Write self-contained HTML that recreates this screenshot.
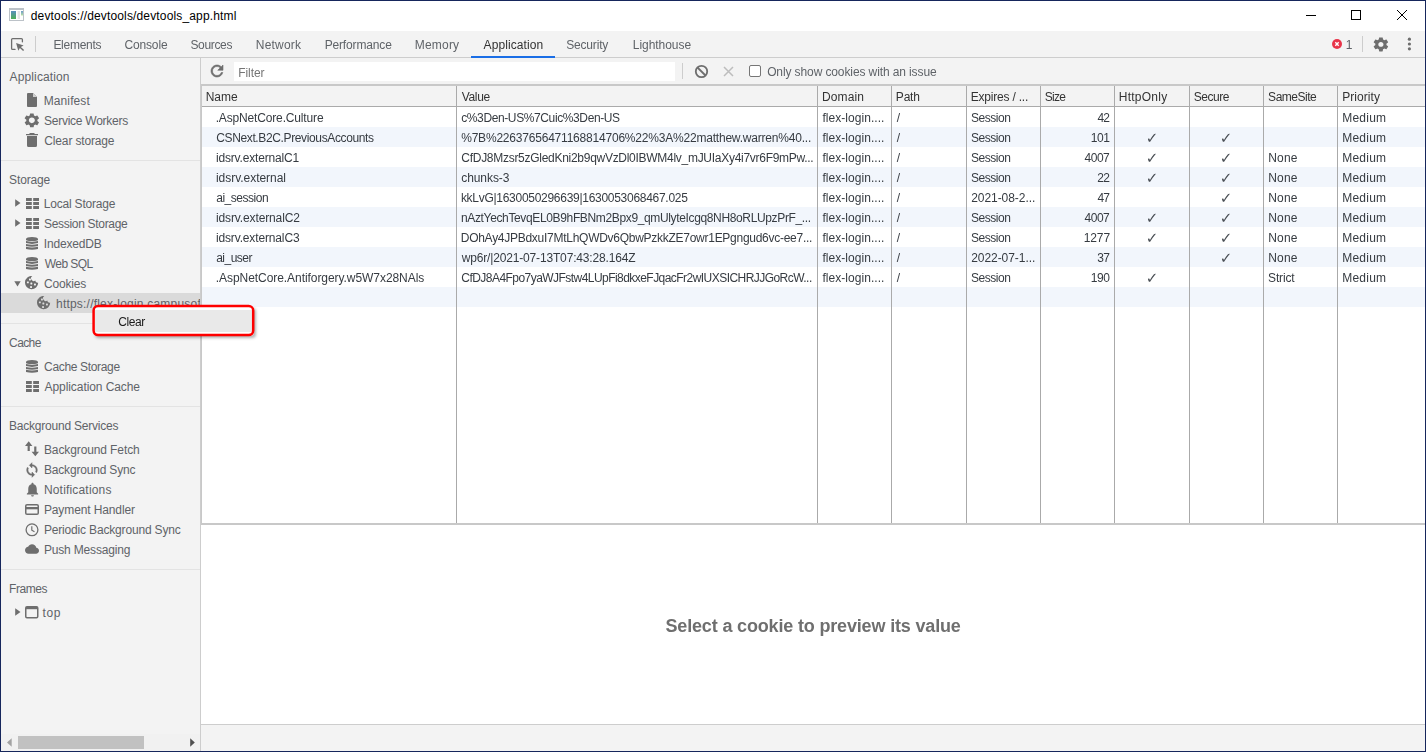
<!DOCTYPE html>
<html><head><meta charset="utf-8"><title>devtools</title>
<style>
*{box-sizing:border-box;margin:0;padding:0}
html,body{width:1426px;height:752px;overflow:hidden;background:#fff}
body{font-family:"Liberation Sans",sans-serif;font-size:12px;color:#303942;position:relative}
div,svg{position:absolute}
.t{white-space:nowrap;color:#363b41}
.g{will-change:transform;left:0;top:0;width:1426px;height:752px}
.ck{width:16px;text-align:center;line-height:20px;font-size:15px;color:#4a4f55;font-family:"DejaVu Sans","Liberation Sans",sans-serif}
.ic{fill:#6e6e6e}
</style></head>
<body>
<!-- title bar -->
<div style="left:1px;top:1px;width:1424px;height:30px;background:#fff"></div>
<svg style="left:9px;top:8px" width="15" height="13" viewBox="0 0 15 13"><defs><linearGradient id="tg1" x1="0" y1="0" x2="0" y2="1"><stop offset="0" stop-color="#5a8fbe"/><stop offset="1" stop-color="#4cae55"/></linearGradient><linearGradient id="tg2" x1="0" y1="0" x2="0" y2="1"><stop offset="0" stop-color="#6a9acb"/><stop offset="1" stop-color="#b9e3a4"/></linearGradient></defs><rect x="0" y="0" width="15" height="13" fill="#bcc2c8"/><rect x="1" y="2" width="13" height="10" fill="#fff"/><rect x="2" y="3" width="5" height="8" fill="url(#tg1)"/><rect x="8.600" y="3" width="2.400" height="8" fill="#e4e4e4"/><rect x="12" y="3" width="2" height="4.500" fill="url(#tg2)"/></svg>
<div class="t" style="left:30.8px;top:1px;line-height:30px;letter-spacing:0.151px;color:#000;">devtools://devtools/devtools_app.html</div>
<svg style="left:1306px;top:15px" width="10" height="1"><rect width="10" height="1" fill="#000"/></svg>
<svg style="left:1351px;top:10px" width="11" height="11"><rect x="0.5" y="0.5" width="9" height="9" fill="none" stroke="#000" stroke-width="1"/></svg>
<svg style="left:1396px;top:9px" width="12" height="12"><path d="M1 1 L11 11 M11 1 L1 11" stroke="#000" stroke-width="1" fill="none"/></svg>

<!-- tab bar -->
<div style="left:1px;top:31px;width:1424px;height:27px;background:#f3f3f3"></div>
<div style="left:1px;top:57px;width:1424px;height:1px;background:#cdcdcd"></div>
<div style="left:471px;top:56px;width:84px;height:2px;background:#1a6ee6"></div>
<svg style="left:10px;top:37px" width="16" height="16" viewBox="0 0 16 16"><path d="M12.400 4.800V2.600Q12.400 1.600 11.400 1.600H2.600Q1.600 1.600 1.600 2.600V11.400Q1.600 12.400 2.600 12.400H5" fill="none" stroke="#6e6e6e" stroke-width="1.300" stroke-linecap="round"/><path d="M6.100 6.100 L13.600 8.400 L10.900 9.900 L14.100 13.100 L13.100 14.100 L9.900 10.900 L8.300 13.700 Z" fill="#6e6e6e"/></svg>
<div style="left:35px;top:36px;width:1px;height:16px;background:#cdcdcd"></div>
<div class="g">
<div class="t" style="left:53.38px;top:31px;line-height:28px;letter-spacing:-0.271px;color:#5f6368;">Elements</div>
<div class="t" style="left:124.41px;top:31px;line-height:28px;letter-spacing:-0.14px;color:#5f6368;">Console</div>
<div class="t" style="left:190.44px;top:31px;line-height:28px;letter-spacing:-0.333px;color:#5f6368;">Sources</div>
<div class="t" style="left:255.84px;top:31px;line-height:28px;letter-spacing:0.19px;color:#5f6368;">Network</div>
<div class="t" style="left:324.66px;top:31px;line-height:28px;letter-spacing:-0.152px;color:#5f6368;">Performance</div>
<div class="t" style="left:414.76px;top:31px;line-height:28px;letter-spacing:0.202px;color:#5f6368;">Memory</div>
<div class="t" style="left:483.59px;top:31px;line-height:28px;letter-spacing:0.098px;color:#333;">Application</div>
<div class="t" style="left:566.21px;top:31px;line-height:28px;letter-spacing:-0.174px;color:#5f6368;">Security</div>
<div class="t" style="left:632.76px;top:31px;line-height:28px;letter-spacing:-0.045px;color:#5f6368;">Lighthouse</div><div class="t" style="left:1345.74px;top:31px;line-height:28px;color:#5f6368;">1</div>
</div>
<svg style="left:1332px;top:39px" width="10" height="10" viewBox="0 0 10 10"><circle cx="5" cy="5" r="5" fill="#e8354a"/><path d="M3.300 3.300 L6.700 6.700 M6.700 3.300 L3.300 6.700" stroke="#fff" stroke-width="1.400"/></svg>
<div style="left:1362px;top:36px;width:1px;height:16px;background:#cdcdcd"></div>
<svg style="left:1372.100px;top:35.500px" width="17.800" height="16.800" viewBox="0 0 24 24" preserveAspectRatio="none"><path fill="#6e6e6e" d="M19.430 12.980c.040-.320.070-.640.070-.980s-.030-.660-.070-.980l2.110-1.650c.190-.150.240-.420.120-.640l-2-3.460c-.120-.220-.390-.300-.610-.220l-2.490 1c-.520-.400-1.080-.730-1.690-.980l-.380-2.650C14.460 2.180 14.250 2 14 2h-4c-.250 0-.460.180-.490.420l-.380 2.650c-.610.250-1.170.590-1.690.980l-2.490-1c-.230-.090-.490 0-.610.220l-2 3.460c-.130.220-.070.490.120.640l2.110 1.650c-.040.320-.070.650-.070.980s.030.660.070.980l-2.110 1.650c-.190.150-.240.420-.120.640l2 3.460c.120.220.390.300.610.220l2.490-1c.520.400 1.080.730 1.690.980l.380 2.650c.030.240.240.420.490.420h4c.250 0 .460-.180.490-.420l.380-2.650c.610-.250 1.170-.590 1.690-.980l2.490 1c.230.090.490 0 .610-.220l2-3.460c.120-.220.070-.490-.120-.640l-2.110-1.650zM12 15.500c-1.930 0-3.500-1.570-3.500-3.500s1.570-3.500 3.500-3.500 3.500 1.570 3.500 3.500-1.570 3.500-3.500 3.500z"/></svg>
<svg style="left:1407px;top:37px" width="5" height="14" viewBox="0 0 5 14"><circle cx="2.400" cy="2.200" r="1.600" fill="#6e6e6e"/><circle cx="2.400" cy="7" r="1.600" fill="#6e6e6e"/><circle cx="2.400" cy="11.800" r="1.600" fill="#6e6e6e"/></svg>

<!-- sidebar -->
<div style="left:1px;top:58px;width:199px;height:693px;background:#f3f3f3"></div>
<div style="left:200px;top:58px;width:1px;height:693px;background:#cdcdcd"></div>
<div style="left:1px;top:160px;width:199px;height:1px;background:#e3e3e3"></div>
<div style="left:1px;top:323px;width:199px;height:1px;background:#e3e3e3"></div>
<div style="left:1px;top:406px;width:199px;height:1px;background:#e3e3e3"></div>
<div style="left:1px;top:569px;width:199px;height:1px;background:#e3e3e3"></div>
<div style="left:1px;top:293px;width:199px;height:20px;background:#dadada"></div>
<div style="left:1px;top:58px;width:199px;height:693px;overflow:hidden"><div style="left:-1px;top:-58px;width:1426px;height:752px">
<div class="t" style="left:56.0px;top:294px;line-height:20px;letter-spacing:0.206px;color:#5f6368;">https://flex-login.campusof</div>
</div></div>
<div class="t" style="left:9.59px;top:67px;line-height:20px;letter-spacing:0.123px;color:#5f6368;">Application</div>
<div class="t" style="left:9.08px;top:170px;line-height:20px;letter-spacing:-0.143px;color:#5f6368;">Storage</div>
<div class="t" style="left:9.08px;top:333px;line-height:20px;letter-spacing:-0.609px;color:#5f6368;">Cache</div>
<div class="t" style="left:9.1px;top:416px;line-height:20px;letter-spacing:-0.227px;color:#5f6368;">Background Services</div>
<div class="t" style="left:9.1px;top:579px;line-height:20px;letter-spacing:-0.438px;color:#5f6368;">Frames</div>
<div class="t" style="left:43.76px;top:91px;line-height:20px;letter-spacing:0.092px;color:#5f6368;">Manifest</div>
<div class="t" style="left:43.99px;top:111px;line-height:20px;letter-spacing:-0.254px;color:#5f6368;">Service Workers</div>
<div class="t" style="left:44.32px;top:131px;line-height:20px;letter-spacing:-0.154px;color:#5f6368;">Clear storage</div>
<div class="t" style="left:43.76px;top:194px;line-height:20px;letter-spacing:-0.2px;color:#5f6368;">Local Storage</div>
<div class="t" style="left:43.99px;top:214px;line-height:20px;letter-spacing:-0.306px;color:#5f6368;">Session Storage</div>
<div class="t" style="left:43.76px;top:234px;line-height:20px;letter-spacing:-0.162px;color:#5f6368;">IndexedDB</div>
<div class="t" style="left:44.76px;top:254px;line-height:20px;letter-spacing:-0.57px;color:#5f6368;">Web SQL</div>
<div class="t" style="left:44.08px;top:274px;line-height:20px;letter-spacing:-0.215px;color:#5f6368;">Cookies</div>
<div class="t" style="left:44.08px;top:357px;line-height:20px;letter-spacing:-0.335px;color:#5f6368;">Cache Storage</div>
<div class="t" style="left:44.59px;top:377px;line-height:20px;letter-spacing:-0.08px;color:#5f6368;">Application Cache</div>
<div class="t" style="left:43.93px;top:440px;line-height:20px;letter-spacing:-0.107px;color:#5f6368;">Background Fetch</div>
<div class="t" style="left:43.93px;top:460px;line-height:20px;letter-spacing:-0.177px;color:#5f6368;">Background Sync</div>
<div class="t" style="left:43.93px;top:480px;line-height:20px;letter-spacing:0.179px;color:#5f6368;">Notifications</div>
<div class="t" style="left:43.93px;top:500px;line-height:20px;letter-spacing:-0.117px;color:#5f6368;">Payment Handler</div>
<div class="t" style="left:43.93px;top:520px;line-height:20px;letter-spacing:-0.169px;color:#5f6368;">Periodic Background Sync</div>
<div class="t" style="left:43.93px;top:540px;line-height:20px;letter-spacing:-0.172px;color:#5f6368;">Push Messaging</div>
<div class="t" style="left:42.59px;top:603px;line-height:20px;letter-spacing:0.562px;color:#5f6368;">top</div>
<svg style="left:27px;top:93px" width="10" height="14" viewBox="0 0 10 14"><path d="M1 0 H6 L10 4 V13 Q10 14 9 14 H1 Q0 14 0 13 V1 Q0 0 1 0 Z" fill="#6e6e6e"/><path d="M6 0 L10 4 H6 Z" fill="#d0d0d0"/></svg>
<svg style="left:23.150px;top:111.700px" width="17.700" height="16.700" viewBox="0 0 24 24" preserveAspectRatio="none"><path fill="#6e6e6e" d="M19.430 12.980c.040-.320.070-.640.070-.980s-.030-.660-.070-.980l2.110-1.650c.190-.150.240-.420.120-.640l-2-3.460c-.120-.220-.390-.300-.610-.220l-2.490 1c-.520-.400-1.080-.730-1.690-.980l-.380-2.650C14.460 2.180 14.250 2 14 2h-4c-.250 0-.460.180-.490.420l-.380 2.650c-.610.250-1.170.590-1.690.980l-2.490-1c-.230-.090-.490 0-.610.220l-2 3.460c-.130.220-.070.490.120.640l2.110 1.650c-.040.320-.070.650-.070.980s.030.660.070.980l-2.110 1.650c-.190.150-.240.420-.120.640l2 3.460c.120.220.390.300.610.220l2.490-1c.520.400 1.080.730 1.690.980l.380 2.650c.030.240.240.420.490.420h4c.250 0 .460-.180.490-.420l.380-2.650c.610-.250 1.170-.590 1.690-.980l2.490 1c.230.090.490 0 .610-.220l2-3.460c.120-.220.070-.490-.120-.640l-2.110-1.650zM12 16.100c-2.260 0-4.100-1.840-4.100-4.100s1.840-4.100 4.100-4.100 4.100 1.840 4.100 4.100-1.840 4.100-4.100 4.100z"/></svg>
<svg style="left:26px;top:133px" width="12" height="14" viewBox="0 0 12 14"><path d="M3.500 0 H8.500 V1 H12 V2.200 H0 V1 H3.500 Z M1 3 H11 V12.500 Q11 14 9.500 14 H2.500 Q1 14 1 12.500 Z" fill="#6e6e6e"/></svg>
<!-- storage -->
<svg style="left:15px;top:199px" width="6" height="8"><path d="M0.200 0.300 L5.500 4 L0.200 7.700 Z" fill="#6e6e6e"/></svg>
<svg style="left:26px;top:198px" width="13" height="11" viewBox="0 0 13 11"><path d="M0 0h5.800v3h-5.800z M7.200 0h5.800v3h-5.800z M0 4h5.800v3h-5.800z M7.200 4h5.800v3h-5.800z M0 8h5.800v3h-5.800z M7.200 8h5.800v3h-5.800z" fill="#6e6e6e"/></svg>
<svg style="left:15px;top:219px" width="6" height="8"><path d="M0.200 0.300 L5.500 4 L0.200 7.700 Z" fill="#6e6e6e"/></svg>
<svg style="left:26px;top:218px" width="13" height="11" viewBox="0 0 13 11"><path d="M0 0h5.800v3h-5.800z M7.200 0h5.800v3h-5.800z M0 4h5.800v3h-5.800z M7.200 4h5.800v3h-5.800z M0 8h5.800v3h-5.800z M7.200 8h5.800v3h-5.800z" fill="#6e6e6e"/></svg>
<svg style="left:26px;top:237px" width="12" height="13" viewBox="0 0 12 13"><ellipse cx="6" cy="2" rx="6" ry="2" fill="#6e6e6e"/><path d="M0 2 V3.200 Q6 4.800 12 3.200 V2 Z M0 4.0 Q6 5.6 12 4.0 V6.1 Q6 7.7 0 6.1 Z M0 6.9 Q6 8.5 12 6.9 V9.0 Q6 10.6 0 9.0 Z M0 9.8 Q6 11.4 12 9.8 V11.9 Q6 13.5 0 11.9 Z " fill="#6e6e6e"/></svg>
<svg style="left:26px;top:257px" width="12" height="13" viewBox="0 0 12 13"><ellipse cx="6" cy="2" rx="6" ry="2" fill="#6e6e6e"/><path d="M0 2 V3.200 Q6 4.800 12 3.200 V2 Z M0 4.0 Q6 5.6 12 4.0 V6.1 Q6 7.7 0 6.1 Z M0 6.9 Q6 8.5 12 6.9 V9.0 Q6 10.6 0 9.0 Z M0 9.8 Q6 11.4 12 9.8 V11.9 Q6 13.5 0 11.9 Z " fill="#6e6e6e"/></svg>
<svg style="left:14px;top:281px" width="7" height="6"><path d="M0.300 0.200 L6.700 0.200 L3.500 5.500 Z" fill="#6e6e6e"/></svg>
<svg style="left:25px;top:276px" width="14" height="14" viewBox="0 0 14 14"><path d="M7.300 0 A6.600 6.600 0 1 0 13.200 6.700 A2.300 2.300 0 0 1 10.300 4.600 A2.600 2.600 0 0 1 7.300 0 Z" fill="#6e6e6e"/><rect x="4.0" y="2.5" width="1.900" height="1.900" rx="0.400" fill="#f3f3f3"/><rect x="1.9" y="5.4" width="1.900" height="1.900" rx="0.400" fill="#f3f3f3"/><rect x="5.4" y="6.5" width="1.900" height="1.900" rx="0.400" fill="#f3f3f3"/><rect x="9.0" y="7.6" width="1.900" height="1.900" rx="0.400" fill="#f3f3f3"/><rect x="5.1" y="10.0" width="1.900" height="1.900" rx="0.400" fill="#f3f3f3"/></svg>
<svg style="left:37px;top:296px" width="14" height="14" viewBox="0 0 14 14"><path d="M7.300 0 A6.600 6.600 0 1 0 13.200 6.700 A2.300 2.300 0 0 1 10.300 4.600 A2.600 2.600 0 0 1 7.300 0 Z" fill="#6e6e6e"/><rect x="4.0" y="2.5" width="1.900" height="1.900" rx="0.400" fill="#dadada"/><rect x="1.9" y="5.4" width="1.900" height="1.900" rx="0.400" fill="#dadada"/><rect x="5.4" y="6.5" width="1.900" height="1.900" rx="0.400" fill="#dadada"/><rect x="9.0" y="7.6" width="1.900" height="1.900" rx="0.400" fill="#dadada"/><rect x="5.1" y="10.0" width="1.900" height="1.900" rx="0.400" fill="#dadada"/></svg>
<!-- cache -->
<svg style="left:26px;top:360px" width="12" height="13" viewBox="0 0 12 13"><ellipse cx="6" cy="2" rx="6" ry="2" fill="#6e6e6e"/><path d="M0 2 V3.200 Q6 4.800 12 3.200 V2 Z M0 4.0 Q6 5.6 12 4.0 V6.1 Q6 7.7 0 6.1 Z M0 6.9 Q6 8.5 12 6.9 V9.0 Q6 10.6 0 9.0 Z M0 9.8 Q6 11.4 12 9.8 V11.9 Q6 13.5 0 11.9 Z " fill="#6e6e6e"/></svg>
<svg style="left:26px;top:381px" width="13" height="11" viewBox="0 0 13 11"><path d="M0 0h5.800v3h-5.800z M7.200 0h5.800v3h-5.800z M0 4h5.800v3h-5.800z M7.200 4h5.800v3h-5.800z M0 8h5.800v3h-5.800z M7.200 8h5.800v3h-5.800z" fill="#6e6e6e"/></svg>
<!-- bg services -->
<svg style="left:25px;top:441px" width="14" height="16" viewBox="0 0 14 16"><path d="M3.700 0.300 L0 4.900 H2.600 V10 H4.800 V4.900 H7.400 Z M10.300 15.300 L14 10.700 H11.400 V5.600 H9.200 V10.700 H6.600 Z" fill="#6e6e6e"/></svg>
<svg style="left:24px;top:462px" width="16" height="16" viewBox="0 0 24 24"><path fill="#6e6e6e" stroke="#6e6e6e" stroke-width="0.700" d="M12 4V1L8 5l4 4V6c3.310 0 6 2.690 6 6 0 1.010-.250 1.970-.700 2.800l1.460 1.460C19.540 15.030 20 13.570 20 12c0-4.420-3.580-8-8-8zm0 14c-3.310 0-6-2.690-6-6 0-1.010.250-1.970.700-2.800L5.240 7.740C4.460 8.970 4 10.430 4 12c0 4.420 3.580 8 8 8v3l4-4-4-4v3z"/></svg>
<svg style="left:23.500px;top:480.500px" width="17" height="17" viewBox="0 0 24 24"><path fill="#6e6e6e" d="M12 22c1.100 0 2-.900 2-2h-4c0 1.100.890 2 2 2zm6-6v-5c0-3.070-1.640-5.640-4.500-6.320V4c0-.830-.670-1.500-1.500-1.500s-1.500.670-1.500 1.500v.680C7.630 5.360 6 7.920 6 11v5l-2 2v1h16v-1l-2-2z"/></svg>
<svg style="left:25px;top:504px" width="14" height="11" viewBox="0 0 14 11"><rect x="0.750" y="0.750" width="12.500" height="9.500" rx="1.300" fill="none" stroke="#6e6e6e" stroke-width="1.500"/><rect x="1" y="3" width="12" height="2.300" fill="#6e6e6e"/></svg>
<svg style="left:25px;top:523px" width="14" height="14" viewBox="0 0 14 14"><circle cx="7" cy="6.800" r="5.900" fill="none" stroke="#6e6e6e" stroke-width="1.300"/><path d="M6.800 3.300 V7.200 L9.500 8.800" fill="none" stroke="#6e6e6e" stroke-width="1.200"/></svg>
<svg style="left:25px;top:544px" width="14" height="10" viewBox="0 0 24 17"><path fill="#6e6e6e" d="M19.350 6.540C18.670 3.090 15.640 .500 12 .500 9.110 .500 6.600 2.140 5.350 4.540 2.340 4.860 0 7.410 0 10.500c0 3.310 2.690 6 6 6h13c2.760 0 5-2.240 5-5 0-2.640-2.050-4.780-4.650-4.960z"/></svg>
<!-- frames -->
<svg style="left:15px;top:608px" width="6" height="8"><path d="M0.200 0.300 L5.500 4 L0.200 7.700 Z" fill="#6e6e6e"/></svg>
<svg style="left:25px;top:606px" width="14" height="13" viewBox="0 0 14 13"><rect x="0.750" y="0.750" width="12" height="11" rx="1.200" fill="none" stroke="#6e6e6e" stroke-width="1.500"/><rect x="1" y="1" width="11.500" height="2.200" fill="#6e6e6e"/></svg>


<!-- scrollbar -->
<div style="left:1px;top:734px;width:199px;height:17px;background:#f1f1f1"></div>
<svg style="left:7px;top:738px" width="5" height="9"><path d="M4.700 0.300 L0 4.500 L4.700 8.700 Z" fill="#a3a3a3"/></svg>
<div style="left:18px;top:736px;width:126px;height:13px;background:#c1c1c1"></div>
<svg style="left:190px;top:738px" width="5" height="9"><path d="M0.200 0.300 L4.800 4.500 L0.200 8.700 Z" fill="#505050"/></svg>

<!-- toolbar -->
<div style="left:201px;top:58px;width:1224px;height:26px;background:#f3f3f3"></div>
<svg style="left:208px;top:62px" width="18" height="18" viewBox="0 0 24 24"><path fill="#6e6e6e" stroke="#6e6e6e" stroke-width="0.800" stroke-linejoin="round" d="M17.650 6.350C16.200 4.900 14.210 4 12 4c-4.420 0-7.990 3.580-7.990 8s3.570 8 7.990 8c3.730 0 6.840-2.550 7.730-6h-2.080c-.820 2.330-3.040 4-5.650 4-3.310 0-6-2.690-6-6s2.690-6 6-6c1.660 0 3.140.690 4.220 1.780L13 11h7V4l-2.350 2.350z"/></svg>
<div style="left:234px;top:62px;width:441px;height:19px;background:#fff"></div>
<div style="left:682px;top:63px;width:1px;height:16px;background:#cdcdcd"></div>
<svg style="left:694px;top:64px" width="15" height="15" viewBox="0 0 15 15"><circle cx="7.500" cy="7.500" r="5.700" fill="none" stroke="#6e6e6e" stroke-width="1.800"/><path d="M3.500 3.500 L11.500 11.500" stroke="#6e6e6e" stroke-width="1.800"/></svg>
<svg style="left:723px;top:66px" width="11" height="11" viewBox="0 0 11 11"><path d="M1 1 L10 10 M10 1 L1 10" stroke="#bdbdbd" stroke-width="1.500" fill="none"/></svg>
<div style="left:749px;top:65px;width:12px;height:12px;border:1px solid #767676;border-radius:2px;background:#fff"></div>

<!-- table -->
<div style="left:201px;top:84px;width:1224px;height:2px;background:#c8c8c8"></div>
<div style="left:201px;top:86px;width:1224px;height:20px;background:#f3f3f3"></div>
<div style="left:201px;top:106px;width:1224px;height:1px;background:#aaa"></div>
<div style="left:202px;top:127px;width:1223px;height:20px;background:#f2f6fc"></div>
<div style="left:202px;top:167px;width:1223px;height:20px;background:#f2f6fc"></div>
<div style="left:202px;top:207px;width:1223px;height:20px;background:#f2f6fc"></div>
<div style="left:202px;top:247px;width:1223px;height:20px;background:#f2f6fc"></div>
<div style="left:202px;top:287px;width:1223px;height:20px;background:#f2f6fc"></div>
<div style="left:456px;top:86px;width:1px;height:437px;background:#aaa"></div>
<div style="left:817px;top:86px;width:1px;height:437px;background:#aaa"></div>
<div style="left:891px;top:86px;width:1px;height:437px;background:#aaa"></div>
<div style="left:966px;top:86px;width:1px;height:437px;background:#aaa"></div>
<div style="left:1040px;top:86px;width:1px;height:437px;background:#aaa"></div>
<div style="left:1114px;top:86px;width:1px;height:437px;background:#aaa"></div>
<div style="left:1189px;top:86px;width:1px;height:437px;background:#aaa"></div>
<div style="left:1263px;top:86px;width:1px;height:437px;background:#aaa"></div>
<div style="left:1337px;top:86px;width:1px;height:437px;background:#aaa"></div>
<div style="left:201px;top:84px;width:1px;height:441px;background:#c8c8c8"></div>
<div style="left:201px;top:523px;width:1224px;height:2px;background:#c8c8c8"></div>
<div class="g">
<div class="t" style="left:238.21px;top:63px;line-height:20px;letter-spacing:-0.073px;color:#757575;">Filter</div><div class="t" style="left:767.15px;top:62px;line-height:20px;letter-spacing:-0.108px;color:#5f6368;">Only show cookies with an issue</div>
<div class="t" style="left:205.76px;top:87px;line-height:20px;letter-spacing:-0.063px;color:#333;">Name</div>
<div class="t" style="left:461.76px;top:87px;line-height:20px;letter-spacing:-0.342px;color:#333;">Value</div>
<div class="t" style="left:822.02px;top:87px;line-height:20px;letter-spacing:0.114px;color:#333;">Domain</div>
<div class="t" style="left:895.84px;top:87px;line-height:20px;letter-spacing:-0.201px;color:#333;">Path</div>
<div class="t" style="left:970.76px;top:87px;line-height:20px;letter-spacing:-0.205px;color:#333;">Expires / ...</div>
<div class="t" style="left:1044.72px;top:87px;line-height:20px;letter-spacing:-0.69px;color:#333;">Size</div>
<div class="t" style="left:1118.76px;top:87px;line-height:20px;letter-spacing:0.242px;color:#333;">HttpOnly</div>
<div class="t" style="left:1193.76px;top:87px;line-height:20px;letter-spacing:-0.473px;color:#333;">Secure</div>
<div class="t" style="left:1268.11px;top:87px;line-height:20px;letter-spacing:-0.488px;color:#333;">SameSite</div>
<div class="t" style="left:1342.21px;top:87px;line-height:20px;letter-spacing:0.051px;color:#333;">Priority</div>
<div class="t" style="left:215.64px;top:108px;line-height:20px;letter-spacing:-0.154px;">.AspNetCore.Culture</div>
<div class="t" style="left:461.2px;top:108px;line-height:20px;letter-spacing:-0.385px;">c%3Den-US%7Cuic%3Den-US</div>
<div class="t" style="left:822.42px;top:108px;line-height:20px;letter-spacing:0.046px;">flex-login....</div>
<div class="t" style="left:896.76px;top:108px;line-height:20px;">/</div>
<div class="t" style="left:971.1px;top:108px;line-height:20px;letter-spacing:-0.48px;">Session</div>
<div class="t" style="left:1097.61px;top:108px;line-height:20px;letter-spacing:-1.084px;">42</div>
<div class="t" style="left:1342.21px;top:108px;line-height:20px;letter-spacing:0.247px;">Medium</div>
<div class="t" style="left:216.23px;top:128px;line-height:20px;letter-spacing:-0.367px;">CSNext.B2C.PreviousAccounts</div>
<div class="t" style="left:461.2px;top:128px;line-height:20px;letter-spacing:-0.205px;">%7B%22637656471168814706%22%3A%22matthew.warren%40...</div>
<div class="t" style="left:822.42px;top:128px;line-height:20px;letter-spacing:0.046px;">flex-login....</div>
<div class="t" style="left:896.76px;top:128px;line-height:20px;">/</div>
<div class="t" style="left:971.1px;top:128px;line-height:20px;letter-spacing:-0.48px;">Session</div>
<div class="t" style="left:1090.7px;top:128px;line-height:20px;letter-spacing:-0.438px;">101</div>
<div class="t" style="left:1342.21px;top:128px;line-height:20px;letter-spacing:0.247px;">Medium</div>
<div class="t ck" style="left:1144px;top:128px">✓</div>
<div class="t ck" style="left:1218px;top:128px">✓</div>
<div class="t" style="left:215.93px;top:148px;line-height:20px;letter-spacing:-0.163px;">idsrv.externalC1</div>
<div class="t" style="left:461.32px;top:148px;line-height:20px;letter-spacing:-0.281px;">CfDJ8Mzsr5zGledKni2b9qwVzDl0IBWM4lv_mJUIaXy4i7vr6F9mPw...</div>
<div class="t" style="left:822.42px;top:148px;line-height:20px;letter-spacing:0.046px;">flex-login....</div>
<div class="t" style="left:896.76px;top:148px;line-height:20px;">/</div>
<div class="t" style="left:971.1px;top:148px;line-height:20px;letter-spacing:-0.48px;">Session</div>
<div class="t" style="left:1084.52px;top:148px;line-height:20px;letter-spacing:-0.48px;">4007</div>
<div class="t" style="left:1268.21px;top:148px;line-height:20px;letter-spacing:0.179px;">None</div>
<div class="t" style="left:1342.21px;top:148px;line-height:20px;letter-spacing:0.247px;">Medium</div>
<div class="t ck" style="left:1144px;top:148px">✓</div>
<div class="t ck" style="left:1218px;top:148px">✓</div>
<div class="t" style="left:215.93px;top:168px;line-height:20px;letter-spacing:-0.028px;">idsrv.external</div>
<div class="t" style="left:461.2px;top:168px;line-height:20px;letter-spacing:-0.058px;">chunks-3</div>
<div class="t" style="left:822.42px;top:168px;line-height:20px;letter-spacing:0.046px;">flex-login....</div>
<div class="t" style="left:896.76px;top:168px;line-height:20px;">/</div>
<div class="t" style="left:971.1px;top:168px;line-height:20px;letter-spacing:-0.48px;">Session</div>
<div class="t" style="left:1097.32px;top:168px;line-height:20px;letter-spacing:-0.714px;">22</div>
<div class="t" style="left:1268.21px;top:168px;line-height:20px;letter-spacing:0.179px;">None</div>
<div class="t" style="left:1342.21px;top:168px;line-height:20px;letter-spacing:0.247px;">Medium</div>
<div class="t ck" style="left:1144px;top:168px">✓</div>
<div class="t ck" style="left:1218px;top:168px">✓</div>
<div class="t" style="left:216.19px;top:188px;line-height:20px;letter-spacing:-0.469px;">ai_session</div>
<div class="t" style="left:460.92px;top:188px;line-height:20px;letter-spacing:-0.283px;">kkLvG|1630050296639|1630053068467.025</div>
<div class="t" style="left:822.42px;top:188px;line-height:20px;letter-spacing:0.046px;">flex-login....</div>
<div class="t" style="left:896.76px;top:188px;line-height:20px;">/</div>
<div class="t" style="left:971.26px;top:188px;line-height:20px;letter-spacing:-0.064px;">2021-08-2...</div>
<div class="t" style="left:1097.61px;top:188px;line-height:20px;letter-spacing:-1.084px;">47</div>
<div class="t" style="left:1268.21px;top:188px;line-height:20px;letter-spacing:0.179px;">None</div>
<div class="t" style="left:1342.21px;top:188px;line-height:20px;letter-spacing:0.247px;">Medium</div>
<div class="t ck" style="left:1218px;top:188px">✓</div>
<div class="t" style="left:215.93px;top:208px;line-height:20px;letter-spacing:-0.119px;">idsrv.externalC2</div>
<div class="t" style="left:461.0px;top:208px;line-height:20px;letter-spacing:-0.357px;">nAztYechTevqEL0B9hFBNm2Bpx9_qmUlyteIcgq8NH8oRLUpzPrF_...</div>
<div class="t" style="left:822.42px;top:208px;line-height:20px;letter-spacing:0.046px;">flex-login....</div>
<div class="t" style="left:896.76px;top:208px;line-height:20px;">/</div>
<div class="t" style="left:971.1px;top:208px;line-height:20px;letter-spacing:-0.48px;">Session</div>
<div class="t" style="left:1084.52px;top:208px;line-height:20px;letter-spacing:-0.48px;">4007</div>
<div class="t" style="left:1268.21px;top:208px;line-height:20px;letter-spacing:0.179px;">None</div>
<div class="t" style="left:1342.21px;top:208px;line-height:20px;letter-spacing:0.247px;">Medium</div>
<div class="t ck" style="left:1144px;top:208px">✓</div>
<div class="t ck" style="left:1218px;top:208px">✓</div>
<div class="t" style="left:215.93px;top:228px;line-height:20px;letter-spacing:-0.144px;">idsrv.externalC3</div>
<div class="t" style="left:460.76px;top:228px;line-height:20px;letter-spacing:-0.27px;">DOhAy4JPBdxuI7MtLhQWDv6QbwPzkkZE7owr1EPgngud6vc-ee7...</div>
<div class="t" style="left:822.42px;top:228px;line-height:20px;letter-spacing:0.046px;">flex-login....</div>
<div class="t" style="left:896.76px;top:228px;line-height:20px;">/</div>
<div class="t" style="left:971.1px;top:228px;line-height:20px;letter-spacing:-0.48px;">Session</div>
<div class="t" style="left:1083.74px;top:228px;line-height:20px;letter-spacing:-0.125px;">1277</div>
<div class="t" style="left:1268.21px;top:228px;line-height:20px;letter-spacing:0.179px;">None</div>
<div class="t" style="left:1342.21px;top:228px;line-height:20px;letter-spacing:0.247px;">Medium</div>
<div class="t ck" style="left:1144px;top:228px">✓</div>
<div class="t ck" style="left:1218px;top:228px">✓</div>
<div class="t" style="left:216.19px;top:248px;line-height:20px;letter-spacing:-0.511px;">ai_user</div>
<div class="t" style="left:461.76px;top:248px;line-height:20px;letter-spacing:-0.165px;">wp6r/|2021-07-13T07:43:28.164Z</div>
<div class="t" style="left:822.42px;top:248px;line-height:20px;letter-spacing:0.046px;">flex-login....</div>
<div class="t" style="left:896.76px;top:248px;line-height:20px;">/</div>
<div class="t" style="left:971.26px;top:248px;line-height:20px;letter-spacing:-0.064px;">2022-07-1...</div>
<div class="t" style="left:1097.27px;top:248px;line-height:20px;letter-spacing:-0.691px;">37</div>
<div class="t" style="left:1268.21px;top:248px;line-height:20px;letter-spacing:0.179px;">None</div>
<div class="t" style="left:1342.21px;top:248px;line-height:20px;letter-spacing:0.247px;">Medium</div>
<div class="t ck" style="left:1218px;top:248px">✓</div>
<div class="t" style="left:215.78px;top:268px;line-height:20px;letter-spacing:-0.059px;">.AspNetCore.Antiforgery.w5W7x28NAls</div>
<div class="t" style="left:461.32px;top:268px;line-height:20px;letter-spacing:-0.545px;">CfDJ8A4Fpo7yaWJFstw4LUpFi8dkxeFJqacFr2wIUXSICHRJJGoRcW...</div>
<div class="t" style="left:822.42px;top:268px;line-height:20px;letter-spacing:0.046px;">flex-login....</div>
<div class="t" style="left:896.76px;top:268px;line-height:20px;">/</div>
<div class="t" style="left:971.1px;top:268px;line-height:20px;letter-spacing:-0.48px;">Session</div>
<div class="t" style="left:1090.7px;top:268px;line-height:20px;letter-spacing:-0.43px;">190</div>
<div class="t" style="left:1268.11px;top:268px;line-height:20px;letter-spacing:-0.177px;">Strict</div>
<div class="t" style="left:1342.21px;top:268px;line-height:20px;letter-spacing:0.247px;">Medium</div>
<div class="t ck" style="left:1144px;top:268px">✓</div>
<div class="t" style="left:665.5px;top:616px;line-height:20px;letter-spacing:-0.165px;color:#6f6f6f;font-size:18px;font-weight:bold;">Select a cookie to preview its value</div>
</div>
<!-- bottom bar -->
<div style="left:201px;top:724px;width:1224px;height:27px;background:#f3f3f3"></div>
<div style="left:201px;top:724px;width:1224px;height:1px;background:#cdcdcd"></div>

<!-- context menu -->
<div style="left:94px;top:306px;width:160px;height:30px;background:#fff;border-radius:4px;box-shadow:1.500px 2px 3px rgba(0,0,0,0.300)"></div>
<div style="left:95px;top:310px;width:157px;height:22px;background:#e9e9e9"></div>
<svg style="left:90px;top:302px" width="170" height="38" viewBox="90 302 170 38"><rect x="93.600" y="306.100" width="159.600" height="29" rx="4.500" ry="4.500" fill="none" stroke="#ff0000" stroke-width="2.500"/></svg>
<div class="g">
<div class="t" style="left:118.24px;top:312px;line-height:20px;letter-spacing:-0.435px;color:#1a1a1a;">Clear</div>
</div>
<!-- window border -->
<div style="left:0;top:0;width:1426px;height:752px;border:1px solid #16265c"></div>
</body></html>
